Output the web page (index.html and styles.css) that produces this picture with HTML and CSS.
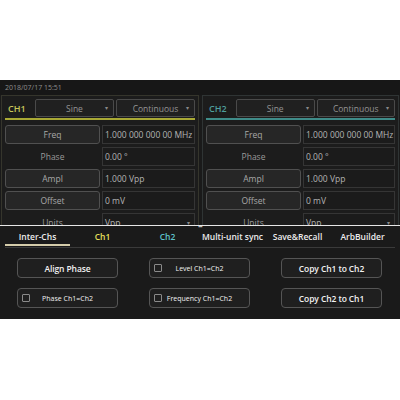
FILE: index.html
```html
<!DOCTYPE html>
<html lang="en">
<head>
  <meta charset="UTF-8" />
  <meta name="viewport" content="width=device-width, initial-scale=1.0"/>
  <title>AFG - Inter-Chs</title>
  <link rel="stylesheet" href="styles.css">
</head>
<body>
  <div class="spacer"></div>

  <div class="screen">
    <div class="statusbar">2018/07/17 15:51</div>

    <div class="channels">
      <section class="channel ch1">
        <div class="ch-head">
          <span class="ch-name">CH1</span>
          <span class="select">Sine<i>▾</i></span>
          <span class="select">Continuous<i>▾</i></span>
        </div>
        <div class="ch-line"></div>
        <div class="params">
          <span class="btn">Freq</span><span class="value">1.000 000 000 00 MHz</span>
          <span class="label">Phase</span><span class="value">0.00 °</span>
          <span class="btn">Ampl</span><span class="value">1.000 Vpp</span>
          <span class="btn">Offset</span><span class="value">0 mV</span>
          <span class="label">Units</span><span class="value drop">Vpp<i>▾</i></span>
        </div>
      </section>

      <section class="channel ch2">
        <div class="ch-head">
          <span class="ch-name">CH2</span>
          <span class="select">Sine<i>▾</i></span>
          <span class="select">Continuous<i>▾</i></span>
        </div>
        <div class="ch-line"></div>
        <div class="params">
          <span class="btn">Freq</span><span class="value">1.000 000 000 00 MHz</span>
          <span class="label">Phase</span><span class="value">0.00 °</span>
          <span class="btn">Ampl</span><span class="value">1.000 Vpp</span>
          <span class="btn">Offset</span><span class="value">0 mV</span>
          <span class="label">Units</span><span class="value drop">Vpp<i>▾</i></span>
        </div>
      </section>
    </div>

    <div class="divider"><span class="grip">•••</span></div>

    <div class="bottom">
      <div class="tabs">
        <span class="tab active">Inter-Chs</span>
        <span class="tab tab-ch1">Ch1</span>
        <span class="tab tab-ch2">Ch2</span>
        <span class="tab">Multi-unit sync</span>
        <span class="tab">Save&amp;Recall</span>
        <span class="tab">ArbBuilder</span>
      </div>

      <div class="actions">
        <button class="action">Align Phase</button>
        <button class="action check"><span class="box"></span><span class="txt">Level Ch1=Ch2</span></button>
        <button class="action">Copy Ch1 to Ch2</button>
        <button class="action check"><span class="box"></span><span class="txt">Phase Ch1=Ch2</span></button>
        <button class="action check"><span class="box"></span><span class="txt">Frequency Ch1=Ch2</span></button>
        <button class="action">Copy Ch2 to Ch1</button>
      </div>
    </div>
  </div>
</body>
</html>
```

FILE: styles.css
```css
body {
  margin: 0;
  background: #fff;
  font-family: "Open Sans", "Noto Sans", sans-serif;
}

.spacer {
  height: 80px;
}

.screen {
  width: 400px;
  height: 239px;
  background: #1a1a1a;
  overflow: hidden;
}

.statusbar {
  height: 15px;
  line-height: 15px;
  padding-left: 5px;
  font-size: 7px;
  color: #8e8e8e;
  background: #171717;
}

/* canais */
.channels {
  display: grid;
  grid-template-columns: 198px 197px;
  gap: 3px;
  padding-left: 1px;
  height: 130px;
  overflow: hidden;
}

.channel {
  border: 1px solid #35352c;
  border-bottom: none;
  padding: 3px 3px 0 3px;
  background: #1c1c1c;
}

.ch2 {
  border-color: #2f3434;
}

.ch-head {
  display: flex;
  align-items: center;
  gap: 2px;
  height: 18px;
}

.ch-name {
  width: 25px;
  padding-left: 3px;
  font-size: 9px;
  font-weight: 600;
}

.ch1 .ch-name { color: #c6c65a; }
.ch2 .ch-name { color: #4e9e9c; }

.select {
  flex: 1;
  height: 16px;
  border: 1px solid #4a4a4a;
  border-radius: 2px;
  background: #202020;
  color: #939393;
  font-size: 8.5px;
  display: flex;
  align-items: center;
  justify-content: center;
  position: relative;
}

.select i,
.value.drop i {
  font-style: normal;
  font-size: 6px;
  color: #8a8a8a;
  margin-left: auto;
  padding-right: 4px;
}

.select i {
  position: absolute;
  right: 1px;
}

.ch-line {
  height: 2px;
  margin-top: 1px;
}

.ch1 .ch-line { background: #a9a935; }
.ch2 .ch-line { background: #3f8c89; }

.params {
  display: grid;
  grid-template-columns: 95px 1fr;
  grid-auto-rows: 19px;
  gap: 3px 2px;
  margin-top: 5px;
  font-size: 8.5px;
}

.btn {
  border: 1px solid #505050;
  border-radius: 3px;
  background: #262626;
  color: #a8a8a8;
  display: flex;
  align-items: center;
  justify-content: center;
}

.label {
  color: #9a9a9a;
  display: flex;
  align-items: center;
  justify-content: center;
}

.value {
  border: 1px solid #353535;
  background: #1b1b1b;
  color: #b4b4b4;
  display: flex;
  align-items: center;
  padding-left: 2px;
  white-space: nowrap;
}

/* separador */
.divider {
  border-top: 1px solid #e6e6e6;
  height: 3px;
  line-height: 3px;
  text-align: center;
}

.grip {
  font-size: 6px;
  color: #ddd;
  letter-spacing: -1px;
  vertical-align: top;
}

/* painel inferior */
.tabs {
  display: grid;
  grid-template-columns: repeat(6, 65px);
  margin: 0 5px;
  padding-bottom: 1px;
  border-bottom: 1px solid #3a3a3a;
}

.tab {
  height: 15px;
  line-height: 15px;
  text-align: center;
  font-size: 8.5px;
  font-weight: 600;
  color: #ececec;
  border-bottom: 2px solid transparent;
}

.tab.active {
  border-bottom-color: #d4ccaa;
}

.tab-ch1 { color: #e6e05a; }
.tab-ch2 { color: #5ec4cc; }

.actions {
  display: grid;
  grid-template-columns: repeat(3, 101px);
  grid-auto-rows: 20px;
  gap: 10px 31px;
  padding: 10px 0 0 17px;
}

.action {
  border: 1px solid #555;
  border-radius: 4px;
  background: #1f1f1f;
  color: #f2f2f2;
  font-family: inherit;
  font-size: 8.5px;
  font-weight: 600;
  letter-spacing: -0.1px;
  padding: 0;
}

.action.check {
  display: grid;
  grid-template-columns: 12px 1fr 12px;
  align-items: center;
  padding: 0 4px;
  font-size: 7px;
  font-weight: 400;
  letter-spacing: 0;
}

.box {
  width: 6px;
  height: 6px;
  border: 1px solid #8a8a8a;
  border-radius: 1px;
}

.txt {
  text-align: center;
  white-space: nowrap;
}
```
